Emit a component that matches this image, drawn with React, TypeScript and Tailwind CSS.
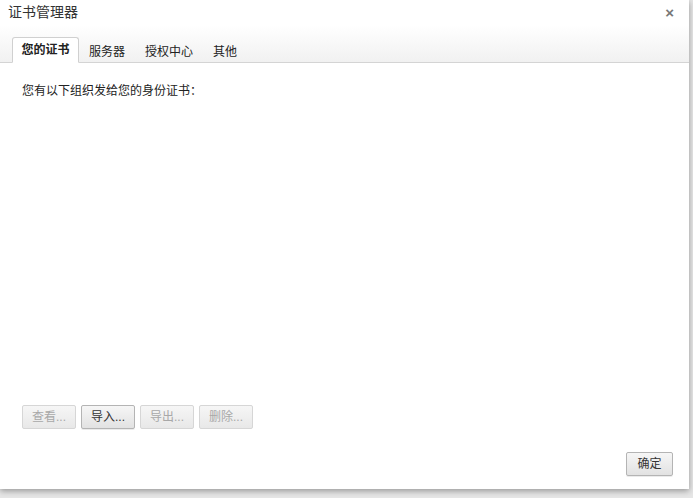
import React from "react";

const font = { fontFamily: '"Liberation Sans", "Noto Sans CJK SC", sans-serif' };

function Btn({ children, disabled }: { children: React.ReactNode; disabled?: boolean }) {
  return (
    <button
      className={
        disabled
          ? "h-[24px] w-[54px] rounded-[2px] border border-[#d6d6d6] bg-gradient-to-b from-[#f6f6f6] to-[#e8e8e8] text-[12px] text-[#a8a8a8] leading-none"
          : "h-[24px] w-[54px] rounded-[2px] border border-[#b4b4b4] bg-gradient-to-b from-[#f6f6f6] to-[#e2e2e2] text-[12px] text-[#333] leading-none shadow-[0_1px_0_rgba(0,0,0,0.08)]"
      }
    >
      {children}
    </button>
  );
}

export default function App() {
  return (
    <div className="w-[693px] h-[498px] bg-[#e6e6e6] overflow-hidden" style={font}>
      <div className="w-[689px] h-[489px] bg-white flex flex-col shadow-[0_2px_6px_rgba(0,0,0,0.35)]">
        <div className="flex items-center justify-between pl-[8px] pr-[15px] h-[25px]">
          <span className="text-[14px] text-[#333]">证书管理器</span>
          <span className="text-[#777] text-[15px] font-bold leading-none">×</span>
        </div>
        <div className="h-[38px] flex items-end px-[12px] border-b border-[#d4d4d4] bg-gradient-to-b from-white to-[#f1f1f1]">
          <div className="h-[26px] w-[67px] -mb-px bg-white border border-[#d0d0d0] border-b-white rounded-t-[3px] flex items-center justify-center text-[12px] font-bold text-[#222]">
            您的证书
          </div>
          <div className="h-[26px] pl-[10px] pr-[10px] flex items-center text-[12px] text-[#222] pt-[6px]">服务器</div>
          <div className="h-[26px] px-[10px] flex items-center text-[12px] text-[#222] pt-[6px]">授权中心</div>
          <div className="h-[26px] px-[10px] flex items-center text-[12px] text-[#222] pt-[6px]">其他</div>
        </div>
        <div className="flex-1 flex flex-col px-[22px] pt-[19px]">
          <div className="text-[12px] text-[#222]">您有以下组织发给您的身份证书：</div>
          <div className="flex-1" />
          <div className="flex gap-[5px]">
            <Btn disabled>查看...</Btn>
            <Btn>导入...</Btn>
            <Btn disabled>导出...</Btn>
            <Btn disabled>删除...</Btn>
          </div>
          <div className="flex justify-end mr-[-6px] mt-[23px] mb-[13px]">
            <button className="h-[24px] w-[47px] rounded-[2px] border border-[#b4b4b4] bg-gradient-to-b from-[#f6f6f6] to-[#e2e2e2] text-[12px] text-[#333] leading-none shadow-[0_1px_0_rgba(0,0,0,0.08)]">
              确定
            </button>
          </div>
        </div>
      </div>
    </div>
  );
}
